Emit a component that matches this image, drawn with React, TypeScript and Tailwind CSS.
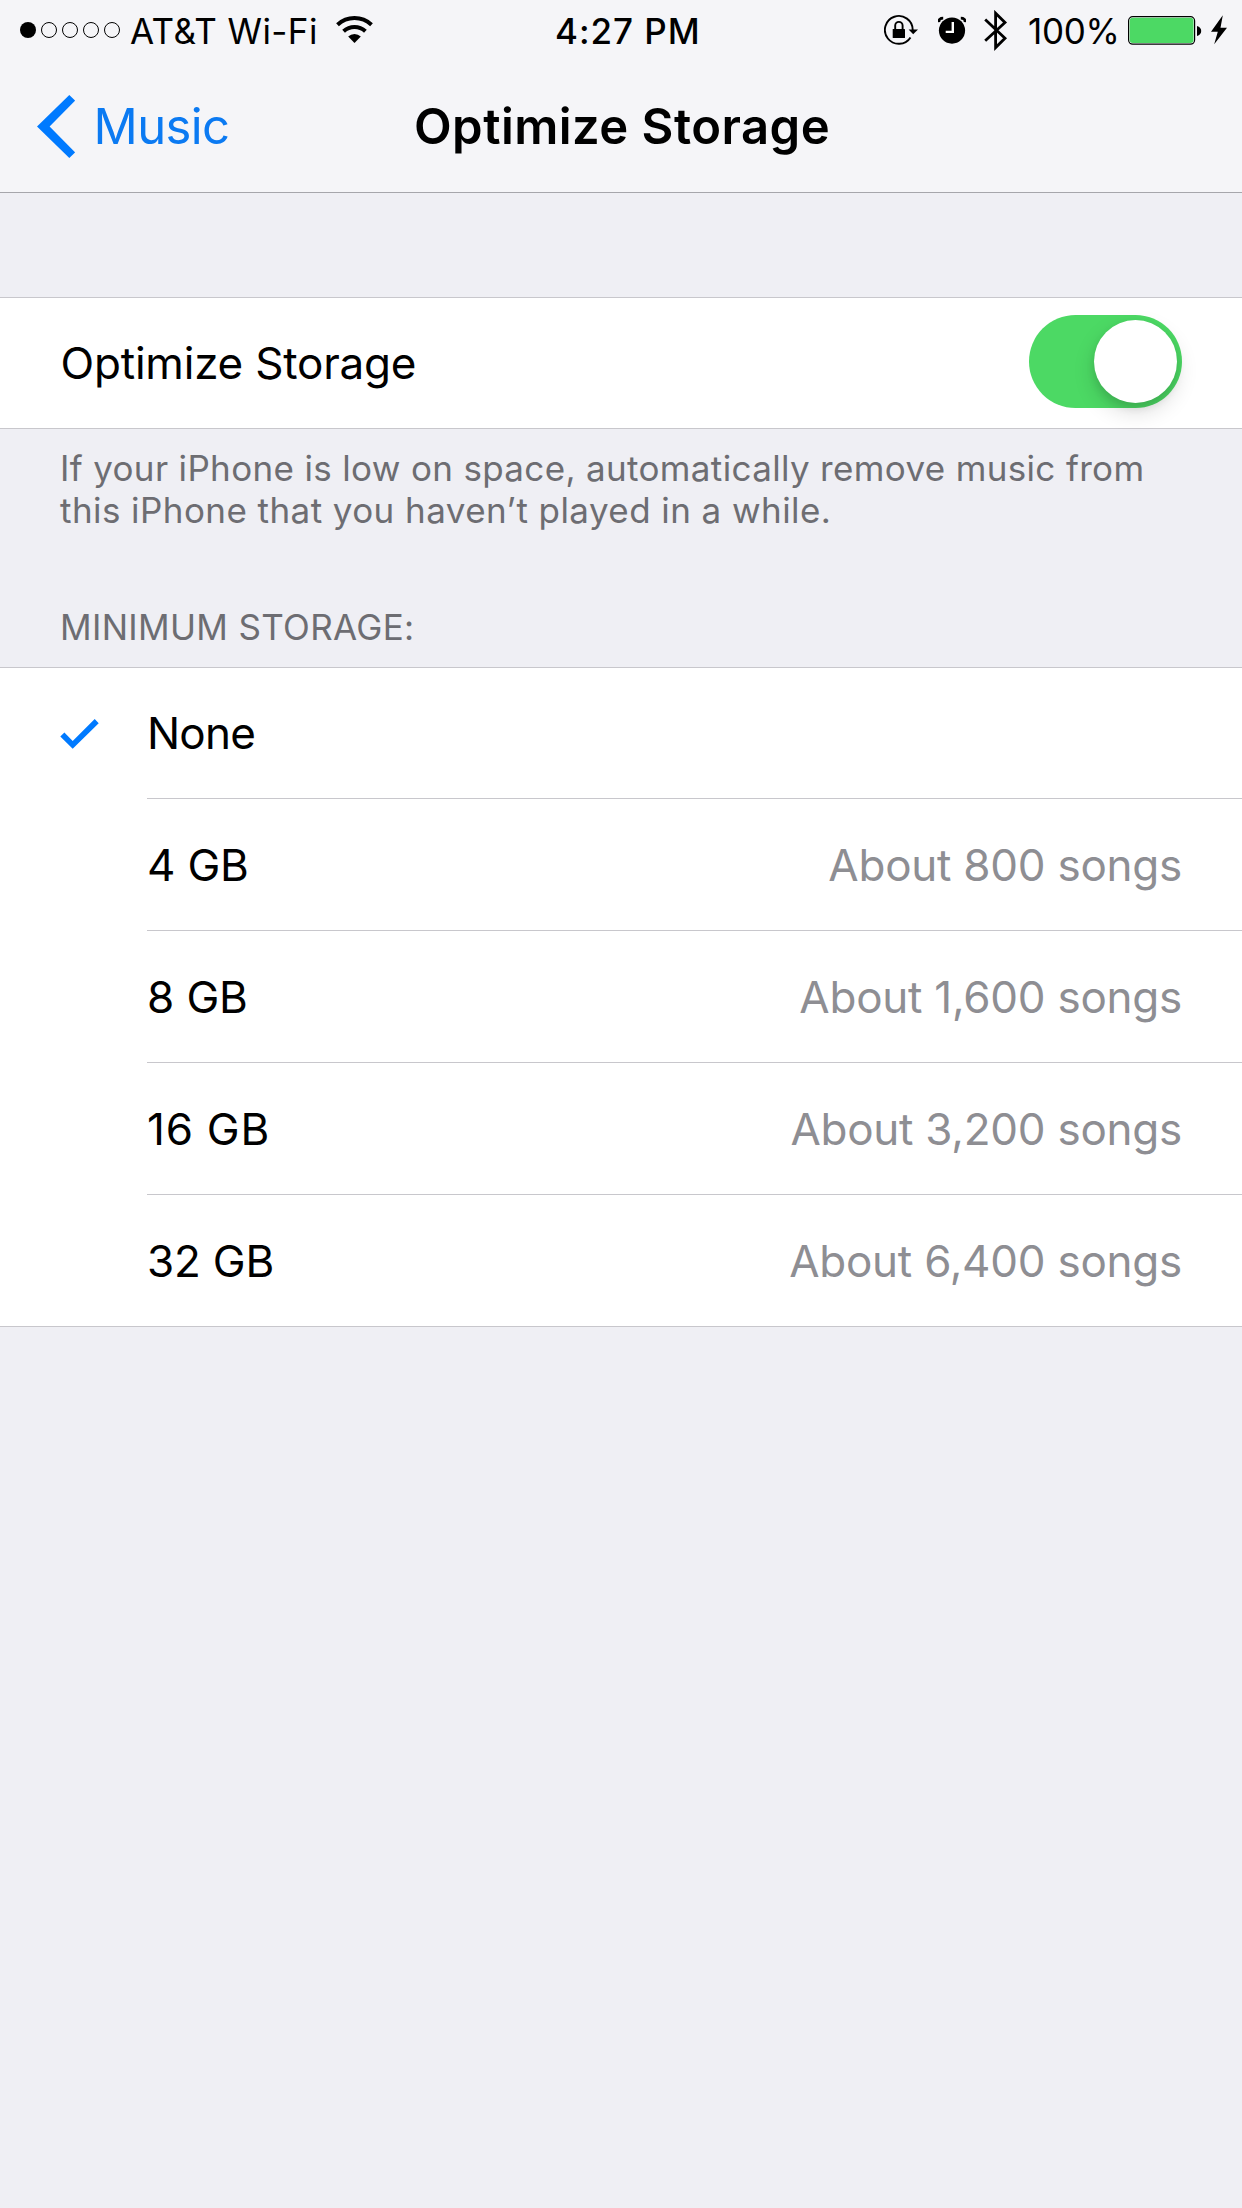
const options = [
  { label: "None", value: "", selected: true, tracking: "tracking-[-0.8px]" },
  { label: "4 GB", value: "About 800 songs", tracking: "tracking-[-0.2px]" },
  { label: "8 GB", value: "About 1,600 songs", tracking: "tracking-[-0.1px]" },
  { label: "16 GB", value: "About 3,200 songs", tracking: "tracking-[0.75px]" },
  { label: "32 GB", value: "About 6,400 songs", tracking: "tracking-[-0.2px]" },
];

function SignalDots() {
  return (
    <div className="flex gap-[5px]">
      <span className="size-4 rounded-full bg-black" />
      {[1, 2, 3, 4].map((dot) => (
        <span key={dot} className="size-4 rounded-full border border-black" />
      ))}
    </div>
  );
}

function WifiIcon() {
  return (
    <svg className="h-7 w-[37px]" viewBox="336 16 37 28" fill="none" stroke="#000" strokeWidth="4">
      <path d="M337.5 24.7A25 25 0 0 1 371.5 24.7" />
      <path d="M343.6 31.3A16 16 0 0 1 365.4 31.3" />
      <path d="M354.5 43L348.2 36.5A9 9 0 0 1 360.8 36.5Z" fill="#000" stroke="none" />
    </svg>
  );
}

function RotationLockIcon() {
  return (
    <svg className="h-8 w-[35px]" viewBox="884 14 35 32" fill="none" stroke="#000" strokeWidth="1.9">
      <path d="M910.5 37.4A13.9 13.9 0 1 1 912.7 30" />
      <path d="M908.6 29.4L918 29.4L913.2 34.2Z" fill="#000" stroke="none" />
      <rect x="892.7" y="28.9" width="12.3" height="9" rx="0.5" fill="#000" stroke="none" />
      <path d="M895.2 29.5V25.6A3.7 3.7 0 0 1 902.6 25.6V29.5" />
    </svg>
  );
}

function AlarmIcon() {
  return (
    <svg className="h-8 w-7" viewBox="938 14 28 32" fill="none">
      <circle cx="952" cy="30.6" r="13.1" fill="#000" />
      <path d="M952.8 22V31.9H945.7" stroke="#fff" strokeWidth="2.4" />
      <path d="M938.9 22.2Q938.6 18.2 943.2 18.2" stroke="#000" strokeWidth="2.8" />
      <path d="M965.1 22.2Q965.4 18.2 960.8 18.2" stroke="#000" strokeWidth="2.8" />
    </svg>
  );
}

function BluetoothIcon() {
  return (
    <svg className="h-[42px] w-6" viewBox="984 10 24 42" fill="none" stroke="#000" strokeWidth="2.8">
      <path d="M985.2 19.6L1005 38.3L995.6 47.6V13.2L1005 22.5L985.2 40.8" />
    </svg>
  );
}

function BatteryIcon() {
  return (
    <svg className="h-[30px] w-[74px]" viewBox="1128 15 74 30" fill="none">
      <rect x="1128.6" y="16.6" width="66" height="27.6" rx="4.2" stroke="#000" strokeWidth="1.2" fill="#f5f5f8" />
      <rect x="1129.7" y="17.7" width="63.8" height="25.4" rx="3" fill="#4cd964" />
      <path d="M1197 26Q1201.2 27.4 1201.2 31T1197 36Z" fill="#000" />
    </svg>
  );
}

function BoltIcon() {
  return (
    <svg className="h-[30px] w-4" viewBox="1211 15 16 30">
      <path d="M1222.8 15.3L1211 31.7H1217.8L1214.2 44.3L1227 27.7H1220.5Z" fill="#000" />
    </svg>
  );
}

function StatusBar() {
  return (
    <div className="grid h-[60px] grid-cols-[555px_auto_1fr] items-center pt-0.5 text-[35px] leading-[42px]">
      <div className="flex items-center pl-5">
        <div className="-mt-0.5">
          <SignalDots />
        </div>
        <span className="ml-2.5 w-[186px] tracking-[0.4px] whitespace-nowrap">AT&amp;T Wi-Fi</span>
        <span className="-mt-0.5 ml-5">
          <WifiIcon />
        </span>
      </div>
      <span className="font-[550] tracking-[0.95px] whitespace-nowrap">4:27 PM</span>
      <div className="flex items-center justify-end pr-[15px]">
        <span className="-mt-0.5">
          <RotationLockIcon />
        </span>
        <span className="-mt-0.5 ml-[19px]">
          <AlarmIcon />
        </span>
        <span className="ml-[18px]">
          <BluetoothIcon />
        </span>
        <span className="ml-5 w-[91px] tracking-[-0.3px] whitespace-nowrap">100%</span>
        <span className="-mt-0.5 ml-[9px]">
          <BatteryIcon />
        </span>
        <span className="-mt-0.5 ml-[9px]">
          <BoltIcon />
        </span>
      </div>
    </div>
  );
}

function NavBar() {
  return (
    <div className="grid h-[132px] grid-cols-[414px_auto_1fr] items-center text-[49px] leading-[60px]">
      <button className="flex items-center pl-[37px] text-left text-[#0b7af2]">
        <svg className="h-16 w-[38px]" viewBox="37 94 38 64">
          <path d="M37 126.5L69.3 95L75.2 100.6L49.6 126.5L75.2 152.4L69.3 158Z" fill="#007aff" />
        </svg>
        <span className="mt-0.5 ml-[18.5px] tracking-[-0.6px]">Music</span>
      </button>
      <h1 className="mt-0.5 font-semibold tracking-[0.46px] whitespace-nowrap">Optimize Storage</h1>
    </div>
  );
}

function Toggle() {
  return (
    <button
      role="switch"
      aria-checked="true"
      aria-label="Optimize Storage"
      className="mb-[3px] flex h-[93px] w-[153px] items-center justify-end rounded-full bg-[#4cd964] pr-[5px]"
    >
      <span className="size-[83px] rounded-full bg-white shadow-[0_9px_22px_rgba(0,0,0,0.14),0_5px_8px_rgba(0,0,0,0.1)]" />
    </button>
  );
}

export default function App() {
  return (
    <main className="min-h-[2208px] w-[1242px] bg-[#efeff4] font-['Inter','Liberation_Sans',sans-serif] text-black">
      <header className="border-b border-[#a6a6ab] bg-[#f5f5f8]">
        <StatusBar />
        <NavBar />
      </header>

      <section className="mt-[104px] flex h-[132px] items-center justify-between border-y border-[#c8c7cc] bg-white pr-[60px] pl-[60.5px]">
        <span className="text-[44px] leading-[54px] tracking-[-0.2px]">Optimize Storage</span>
        <Toggle />
      </section>
      <p className="pt-[18px] pl-[60px] text-[35px] leading-[42px] tracking-[0.34px] whitespace-nowrap text-[#6d6d72]">
        If your iPhone is low on space, automatically remove music from
        <br />
        <span className="tracking-[0.43px]">this iPhone that you haven’t played in a while.</span>
      </p>

      <h2 className="mt-[75px] pl-[60px] text-[35px] leading-[42px] tracking-[0.32px] text-[#6d6d72]">
        MINIMUM STORAGE:
      </h2>
      <ul className="mt-[19px] border-y border-[#c8c7cc] bg-white text-[44px] leading-[54px]">
        {options.map((option) => (
          <li key={option.label} className="group flex h-[132px] first:h-[131px] last:h-[131px]">
            <div className="flex w-[147px] shrink-0 items-center pl-[60px]">
              {option.selected && (
                <svg className="h-[31px] w-[39px]" viewBox="60 717 39 31">
                  <path d="M60.3 735.6L64.4 731.6L72.7 740L94.7 718L98.7 722.2L72.7 747.8Z" fill="#007aff" />
                </svg>
              )}
            </div>
            <div className="flex flex-1 items-center justify-between border-b border-[#c8c7cc] pr-[60px] group-last:border-b-0">
              <span className={option.tracking}>{option.label}</span>
              <span className="tracking-[-0.25px] text-[#8e8e93]">{option.value}</span>
            </div>
          </li>
        ))}
      </ul>
    </main>
  );
}
